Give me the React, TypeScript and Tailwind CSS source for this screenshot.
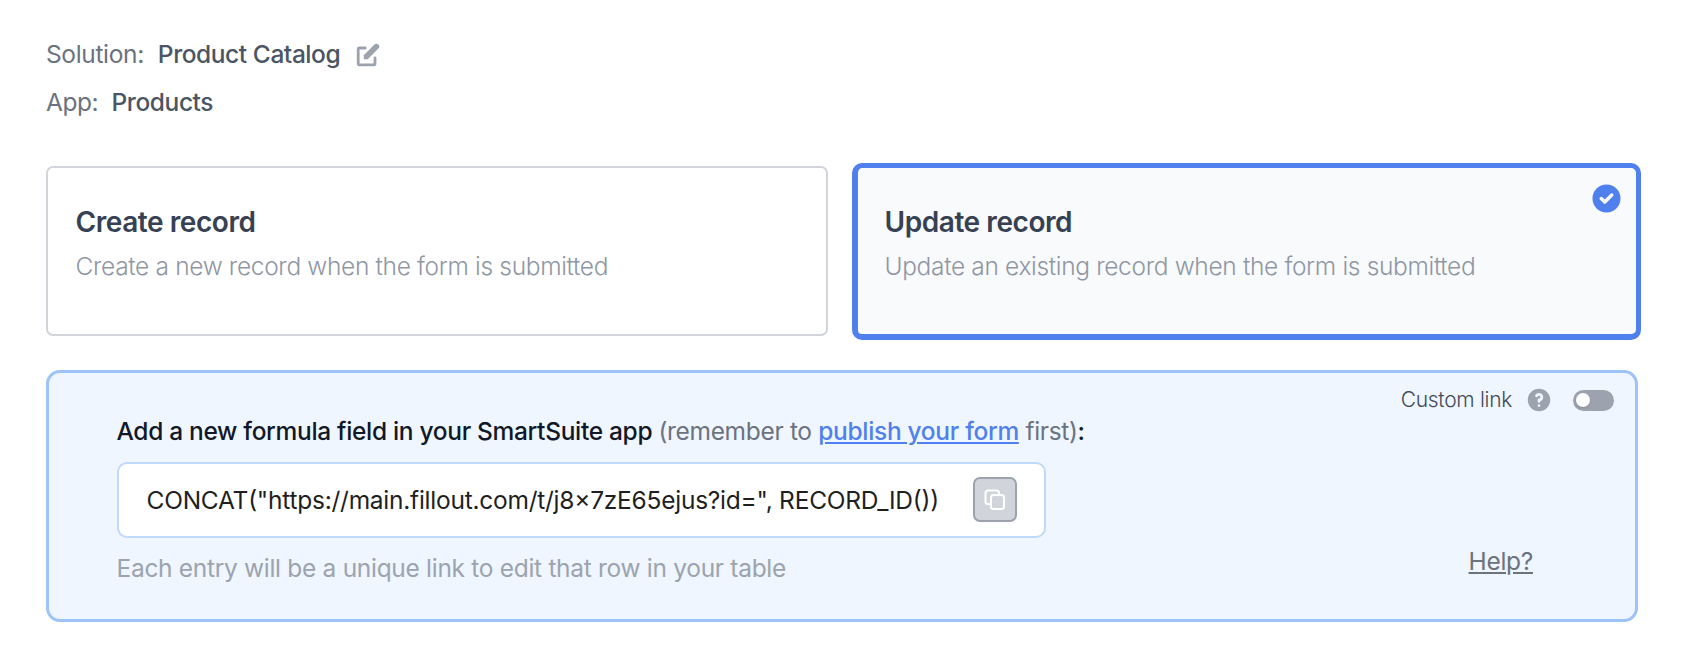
import { HiCheckCircle, HiPencilAlt, HiQuestionMarkCircle } from "react-icons/hi";

function CopyIcon() {
  return (
    <svg viewBox="0 0 22 22" className="size-[22px] shrink-0" fill="none" stroke="currentColor" strokeWidth="2" strokeLinejoin="round">
      <rect x="7" y="6" width="13" height="14" rx="2.5" />
      <path d="M7 15H4a2.5 2.5 0 0 1-2.5-2.5V4A2.5 2.5 0 0 1 4 1.5h8.5A2.5 2.5 0 0 1 15 4v2" />
    </svg>
  );
}

function Option({ title, text }: { title: string; text: string }) {
  return (
    <>
      <h3 className="text-[28px] leading-[40px] font-semibold tracking-[-0.43px] text-gray-700">{title}</h3>
      <p className="mt-[7px] text-[24.5px] leading-[35px] font-light tracking-[-0.335px] text-[#8f97a5]">{text}</p>
    </>
  );
}

export default function App() {
  return (
    <main className="h-[670px] w-[1683px] overflow-hidden bg-white pt-[37px] pr-[42px] pl-[46px] font-['Inter',sans-serif] whitespace-nowrap">
      <div className="flex items-center text-[24.5px] leading-[35px] tracking-[-0.35px] text-[#6b7280]">
        <span>Solution:</span>
        <span className="ml-[14px] font-medium tracking-[-0.43px] text-[#4b5563]">Product Catalog</span>
        <HiPencilAlt className="ml-[14px] size-[28px] text-[#9ca3af]" />
      </div>
      <div className="mt-[13px] flex items-center text-[24.5px] leading-[35px] tracking-[-0.5px] text-[#6b7280]">
        <span>App:</span>
        <span className="ml-[13.5px] font-medium tracking-[-0.4px] text-[#4b5563]">Products</span>
      </div>

      <div className="mt-[43px] flex items-start">
        <div className="mt-[3px] h-[170px] w-[782px] rounded-[7px] border-2 border-[#d1d5db] pt-[34px] pl-[27.5px]">
          <Option title="Create record" text="Create a new record when the form is submitted" />
        </div>
        <div className="relative ml-[24px] h-[177px] w-[789px] rounded-[10px] border-[5px] border-b-[6px] border-l-[6px] border-[#4f80ee] bg-[#f9fafc] pt-[34px] pl-[26.5px]">
          <Option title="Update record" text="Update an existing record when the form is submitted" />
          <HiCheckCircle className="absolute top-[12.5px] right-[12.5px] size-[35px] text-[#4f80ee]" />
        </div>
      </div>

      <section className="-ml-[0.5px] mt-[30px] flex h-[252px] w-[1592px] justify-between rounded-[14px] border-[3px] border-[#9dc3f9] bg-[#eff6ff]">
        <div className="pt-[41px] pl-[68px]">
          <p className="text-[24.5px] leading-[35px] font-medium tracking-[-0.32px] text-[#111827]">
            Add a new formula field in your SmartSuite app{" "}
            <span className="font-normal text-[#6b7280]">
              (remember to <a className="font-medium text-[#4f80ee] underline">publish your form</a> first)
            </span>
            :
          </p>
          <div className="mt-[13px] flex h-[76px] w-[929px] items-center justify-between rounded-[10px] border-2 border-[#bfd9fd] bg-white pr-[27px] pl-[28px]">
            <span className="text-[24.5px] leading-[35px] tracking-[-0.245px] text-[#1f1f1f] [font-feature-settings:'calt'_1]">
              CONCAT("https://main.fillout.com/t/j8x7zE65ejus?id=", RECORD_ID())
            </span>
            <button className="-mt-px flex h-[45px] w-[44px] items-center justify-center rounded-[7px] border-2 border-[#9ca3af] bg-[#d1d5db] text-white">
              <CopyIcon />
            </button>
          </div>
          <p className="mt-[13px] text-[24.5px] leading-[35px] tracking-[-0.3px] text-[#9ca3af]">
            Each entry will be a unique link to edit that row in your table
          </p>
        </div>
        <div className="flex flex-col items-end pt-[13px] pr-[21px]">
          <div className="flex items-center text-[21px] leading-[28px] text-[#404a58]">
            <span className="font-light tracking-[-0.3px]">Custom link</span>
            <HiQuestionMarkCircle className="ml-[12.5px] size-[28px] text-[#9ca3af]" />
            <span className="ml-[20px] flex h-[21px] w-[41px] items-center rounded-full bg-[#9ca3af] pl-[3px]">
              <span className="size-[14px] rounded-full bg-white shadow" />
            </span>
          </div>
          <a className="mt-[130px] mr-[80.5px] text-[24.5px] leading-[35px] tracking-[-0.3px] text-[#6b7280] underline">Help?</a>
        </div>
      </section>
    </main>
  );
}
